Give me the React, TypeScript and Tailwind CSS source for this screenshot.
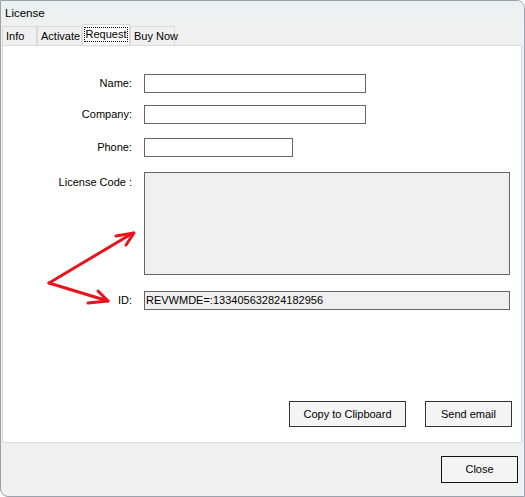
import type { ReactNode } from 'react';

const font = { fontFamily: '"Liberation Sans", Arial, sans-serif' };

// Fila etiqueta + control del formulario
function Row({ label, top, children, alignTop }: { label: string; top: string; children: ReactNode; alignTop?: boolean }) {
  return (
    <div className={`flex gap-[12px] ${top} ${alignTop ? 'items-start' : 'items-center'}`}>
      <div className={`w-[129px] shrink-0 text-right text-[11px] text-black ${alignTop ? 'pt-[2px]' : ''}`}>{label}</div>
      {children}
    </div>
  );
}

function Tab({ label, width, selected }: { label: string; width: string; selected?: boolean }) {
  if (selected) {
    return (
      <div className={`${width} relative z-10 -mt-[2px] flex h-[21px] items-start justify-center whitespace-nowrap border border-b-0 border-[#d9d9d9] bg-white pt-[2px] text-[11px]`}>
        <span className="border border-dotted border-black px-[1px] leading-[13px]">{label}</span>
      </div>
    );
  }
  return (
    <div className={`${width} flex h-[19px] items-center whitespace-nowrap border border-b-0 border-[#dadada] bg-[#f0f0f0] pl-[3px] text-[11px]`}>
      {label}
    </div>
  );
}

export default function App() {
  return (
    <div
      style={font}
      className="flex h-[497px] w-[525px] flex-col overflow-hidden rounded-tr-[8px] rounded-bl-[8px] border border-[#9aa3ab] bg-[#f0f0f0] text-black"
    >
      {/* Barra de título */}
      <div className="flex h-[26px] shrink-0 items-center bg-gradient-to-b from-[#eaf1f1] to-[#f0f0f0] pl-[4px] text-[11.5px]">
        License
      </div>

      {/* Pestañas */}
      <div className="flex h-[18px] shrink-0 items-end pl-[1px]">
        <Tab label="Info" width="w-[35px]" />
        <Tab label="Activate" width="w-[45px]" />
        <Tab label="Request" width="w-[48px]" selected />
        <Tab label="Buy Now" width="w-[45px]" />
      </div>

      {/* Panel de la pestaña */}
      <div className="relative ml-[1px] mr-[2px] h-[398px] shrink-0 border border-[#dcdcdc] bg-white">
        <div className="flex flex-col pt-[28px]">
          <Row label="Name:" top="">
            <div className="h-[19px] w-[222px] border border-[#666] bg-white" />
          </Row>
          <Row label="Company:" top="mt-[12px]">
            <div className="h-[19px] w-[222px] border border-[#666] bg-white" />
          </Row>
          <Row label="Phone:" top="mt-[14px]">
            <div className="h-[19px] w-[149px] border border-[#666] bg-white" />
          </Row>
          <Row label="License Code :" top="mt-[15px]" alignTop>
            <div className="h-[103px] w-[366px] border border-[#666] bg-[#f0f0f0]" />
          </Row>
          <Row label="ID:" top="mt-[16px]">
            <div className="flex h-[19px] w-[366px] items-center border border-[#666] bg-[#f0f0f0] pl-[1px] text-[11px]">
              REVWMDE=:133405632824182956
            </div>
          </Row>

          <div className="mt-[91px] flex justify-end gap-[19px] pr-[9px]">
            <button className="h-[26px] w-[117px] border border-[#333] bg-[#f4f4f4] text-[11px]">Copy to Clipboard</button>
            <button className="h-[26px] w-[87px] border border-[#333] bg-[#f4f4f4] text-[11px]">Send email</button>
          </div>
        </div>

        {/* Flechas rojas dibujadas encima */}
        <svg className="pointer-events-none absolute left-0 top-0" width="520" height="400" viewBox="0 0 520 400">
          <g transform="translate(-2,-45)" stroke="#e8141c" strokeWidth="3" fill="none" strokeLinecap="round" strokeLinejoin="round">
            <path d="M48 282 L132 232" />
            <path d="M115 235 L133 232 L125 244" />
            <path d="M48 282 L107 300" />
            <path d="M97 290 L107 300 L87 302" />
          </g>
        </svg>
      </div>

      {/* Zona inferior */}
      <div className="flex flex-1 items-start justify-end pr-[6px] pt-[13px]">
        <button className="h-[27px] w-[77px] border-[1.5px] border-[#111] bg-[#f4f4f4] text-[11px]">Close</button>
      </div>
    </div>
  );
}
